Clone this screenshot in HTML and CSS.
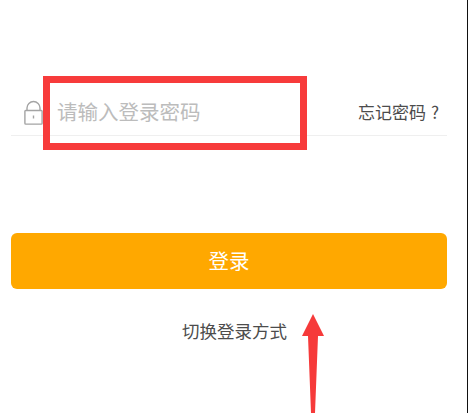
FILE: index.html
```html
<!DOCTYPE html>
<html lang="zh-CN">
<head>
  <meta charset="UTF-8">
  <title>登录</title>
  <link rel="stylesheet" href="styles.css">
</head>
<body>
  <div class="page">
    <div class="password-row">
      <svg class="lock" width="19" height="25" viewBox="0 0 19 25" fill="none" stroke="#a4a4a4" stroke-width="1.4">
        <path d="M3 10.5V8a6.5 6.5 0 0 1 13 0v2.5"/>
        <rect x="0.9" y="10.5" width="17.2" height="13.6" rx="0.8"/>
        <path d="M9.5 15.5v3"/>
      </svg>
      <span class="placeholder">请输入登录密码</span>
      <span class="forgot">忘记密码<span class="forgot-mark">?</span></span>
    </div>
    <div class="login-btn">登录</div>
    <div class="switch">切换登录方式</div>

    <!-- annotations drawn over the screenshot -->
    <div class="mark-box"></div>
    <svg class="mark-arrow" width="22" height="99" viewBox="0 0 22 99">
      <path d="M11 0L22 22H16L13 99H9L6 22H0Z" fill="#f63a3a"/>
    </svg>
  </div>
</body>
</html>
```

FILE: styles.css
```css
html, body {
  margin: 0;
  padding: 0;
  background: #ffffff;
}

.page {
  position: relative;
  width: 468px;
  height: 413px;
  box-sizing: border-box;
  padding: 0 20px 0 11px;
  overflow: hidden;
  font-family: "Noto Sans CJK SC", "Liberation Sans", sans-serif;
  border-right: 1px solid #111111;
}

.password-row {
  display: flex;
  align-items: center;
  height: 32px;
  margin-top: 95px;
  padding: 0 8px 8px 13px;
  border-bottom: 1px solid #efefef;
}

.lock {
  flex: none;
  margin: 3px 14px 0 0;
}

.placeholder {
  flex: 1;
  font-size: 20.5px;
  color: #bcbcbc;
}

.forgot {
  font-size: 17px;
  color: #4c4c4c;
}

.forgot-mark {
  margin-left: 5px;
}

.login-btn {
  height: 56px;
  line-height: 54px;
  margin-top: 97px;
  border-radius: 6px;
  background: #ffa800;
  color: #ffffff;
  font-size: 20.5px;
  text-align: center;
}

.switch {
  margin: 30px 0 0 11px;
  font-size: 17.5px;
  line-height: 24px;
  color: #4c4c4c;
  text-align: center;
}

.mark-box {
  position: absolute;
  left: 43px;
  top: 76px;
  width: 250px;
  height: 60px;
  border: 7px solid #f73b3b;
}

.mark-arrow {
  position: absolute;
  left: 302px;
  top: 314px;
}
```
